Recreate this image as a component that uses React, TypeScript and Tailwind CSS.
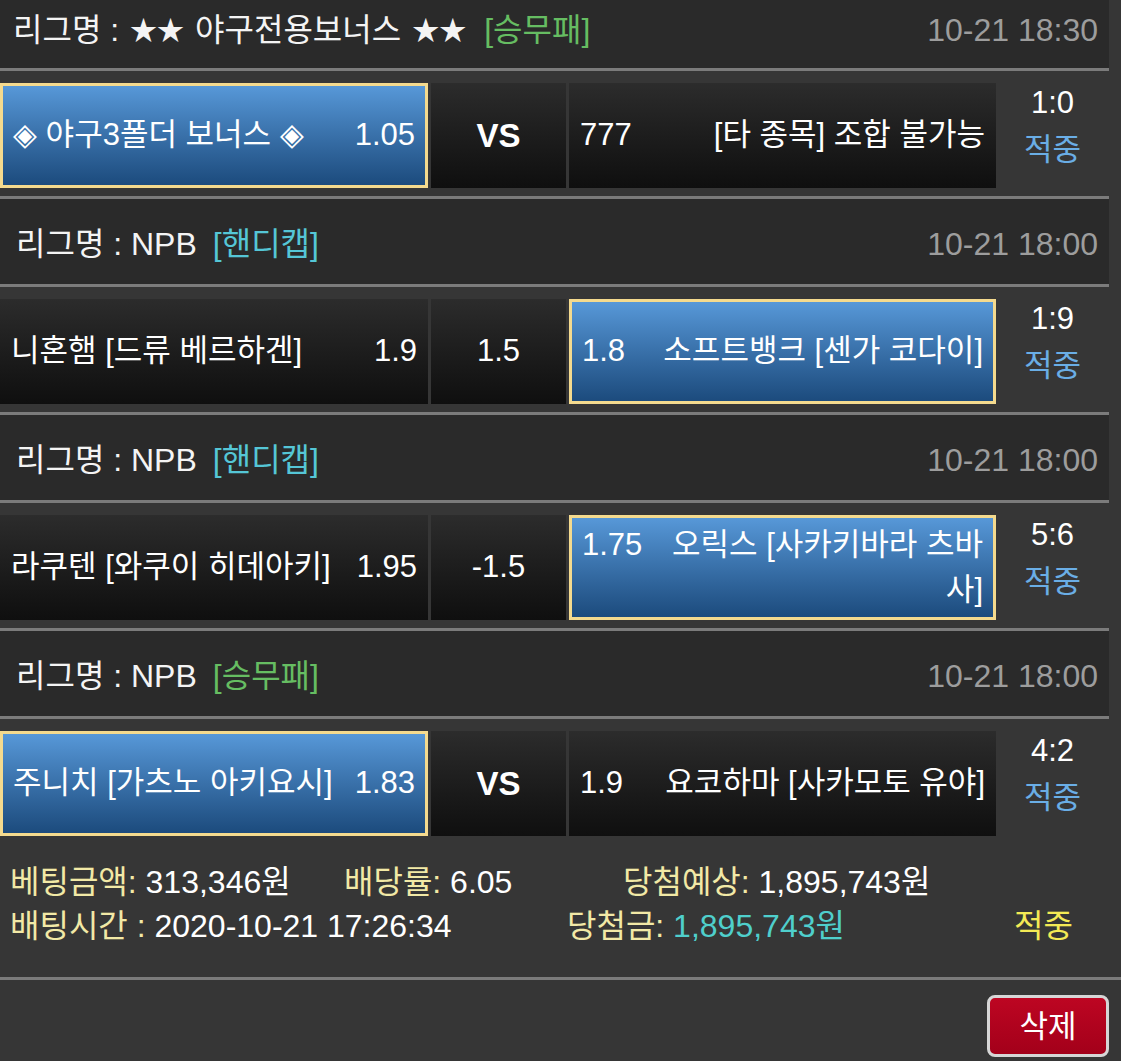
import React from "react";

const FONT = "font-['Liberation_Sans','Noto_Sans_CJK_KR',sans-serif]";

function Line({ full = false }: { full?: boolean }) {
  return <div className={`h-[3px] bg-[#7b7b7b] ${full ? "w-full" : "w-[1109px]"}`} />;
}

function Stars({ last = false }: { last?: boolean }) {
  return (
    <span
      className={`font-['Noto_Sans_CJK_KR',sans-serif] text-[27px] align-[1px] ${
        last ? "ml-[11px] mr-[2px]" : "mx-[11px]"
      }`}
    >
      ★★
    </span>
  );
}

function Header({
  league,
  tag,
  tagColor,
  time,
  first = false,
}: {
  league: React.ReactNode;
  tag: string;
  tagColor: string;
  time: string;
  first?: boolean;
}) {
  return (
    <div
      className={`w-[1109px] bg-[#2a2a2a] flex items-center justify-between pr-[11px] text-[32px] ${
        first ? "h-[68px] pb-[8px] pl-[13px]" : "h-[85px] pt-[4px] pl-[16px]"
      }`}
    >
      <div className="whitespace-nowrap text-[#f4f4f4]">
        {league}
        <span className={`ml-[16px] ${tagColor}`}>{tag}</span>
      </div>
      <div className="whitespace-nowrap text-[#9d9d9d]">{time}</div>
    </div>
  );
}

function Cell({
  selected,
  width,
  children,
  center = false,
}: {
  selected?: boolean;
  width: string;
  children: React.ReactNode;
  center?: boolean;
}) {
  const base = selected
    ? "border-[3px] border-[#f4da8e] bg-linear-to-b from-[#5798d8] to-[#1c4b7d] px-[10px]"
    : "bg-linear-to-b from-[#2c2c2c] to-[#0f0f0f] px-[11px]";
  return (
    <div
      className={`${width} h-[105px] shrink-0 flex items-center ${
        center ? "justify-center" : "justify-between"
      } ${base} text-white`}
    >
      {children}
    </div>
  );
}

function Score({ score }: { score: string }) {
  return (
    <div className="w-[113px] shrink-0 flex flex-col items-center leading-[47px] -mt-[4px]">
      <div className="text-white">{score}</div>
      <div className="text-[#6aaee6]">적중</div>
    </div>
  );
}

function MatchRow({ children }: { children: React.ReactNode }) {
  return <div className="w-[1109px] h-[125px] pt-[12px] pb-[8px] flex gap-[3px]">{children}</div>;
}

export default function App() {
  return (
    <div className={`${FONT} w-[1121px] min-h-[1061px] bg-[#363636] text-[31px] leading-[1.5] overflow-hidden`}>
      <Header
        first
        league={
          <>
            리그명 :<Stars />야구전용보너스<Stars last />
          </>
        }
        tag="[승무패]"
        tagColor="text-[#66bd62]"
        time="10-21 18:30"
      />
      <Line />
      <MatchRow>
        <Cell selected width="w-[428px]">
          <span className="whitespace-nowrap">◈ 야구3폴더 보너스 ◈</span>
          <span>1.05</span>
        </Cell>
        <Cell width="w-[135px]" center>
          <span className="font-bold text-[33px]">VS</span>
        </Cell>
        <div className="flex">
          <Cell width="w-[427px]">
            <span>777</span>
            <span className="whitespace-nowrap">[타 종목] 조합 불가능</span>
          </Cell>
          <Score score="1:0" />
        </div>
      </MatchRow>
      <Line />
      <Header league="리그명 : NPB" tag="[핸디캡]" tagColor="text-[#55c6d6]" time="10-21 18:00" />
      <Line />
      <MatchRow>
        <Cell width="w-[428px]">
          <span className="whitespace-nowrap">니혼햄 [드류 베르하겐]</span>
          <span>1.9</span>
        </Cell>
        <Cell width="w-[135px]" center>
          <span>1.5</span>
        </Cell>
        <div className="flex">
          <Cell selected width="w-[427px]">
            <span>1.8</span>
            <span className="whitespace-nowrap">소프트뱅크 [센가 코다이]</span>
          </Cell>
          <Score score="1:9" />
        </div>
      </MatchRow>
      <Line />
      <Header league="리그명 : NPB" tag="[핸디캡]" tagColor="text-[#55c6d6]" time="10-21 18:00" />
      <Line />
      <MatchRow>
        <Cell width="w-[428px]">
          <span className="whitespace-nowrap">라쿠텐 [와쿠이 히데아키]</span>
          <span>1.95</span>
        </Cell>
        <Cell width="w-[135px]" center>
          <span>-1.5</span>
        </Cell>
        <div className="flex">
          <Cell selected width="w-[427px]">
            <div className="flex w-full justify-between items-start self-stretch pt-[4px] leading-[45px]">
              <span>1.75</span>
              <span className="whitespace-nowrap text-right">
                오릭스 [사카키바라 츠바
                <br />
                사]
              </span>
            </div>
          </Cell>
          <Score score="5:6" />
        </div>
      </MatchRow>
      <Line />
      <Header league="리그명 : NPB" tag="[승무패]" tagColor="text-[#66bd62]" time="10-21 18:00" />
      <Line />
      <MatchRow>
        <Cell selected width="w-[428px]">
          <span className="whitespace-nowrap">주니치 [가츠노 아키요시]</span>
          <span>1.83</span>
        </Cell>
        <Cell width="w-[135px]" center>
          <span className="font-bold text-[33px]">VS</span>
        </Cell>
        <div className="flex">
          <Cell width="w-[427px]">
            <span>1.9</span>
            <span className="whitespace-nowrap">요코하마 [사카모토 유야]</span>
          </Cell>
          <Score score="4:2" />
        </div>
      </MatchRow>

      <div className="pt-[16px] pb-[29px] pl-[10px] leading-[44px] text-[32px] text-white whitespace-nowrap">
        <div className="flex">
          <div className="w-[334px]">
            <span className="text-[#f2e9a6]">베팅금액:</span> 313,346원
          </div>
          <div className="w-[279px]">
            <span className="text-[#f2e9a6]">배당률:</span> 6.05
          </div>
          <div>
            <span className="text-[#f2e9a6]">당첨예상:</span> 1,895,743원
          </div>
        </div>
        <div className="flex">
          <div className="w-[557px]">
            <span className="text-[#f2e9a6]">배팅시간 :</span> 2020-10-21 17:26:34
          </div>
          <div className="w-[447px]">
            <span className="text-[#f2e9a6]">당첨금:</span>{" "}
            <span className="text-[#4fcfcc]">1,895,743원</span>
          </div>
          <div className="text-[#f4ea55]">적중</div>
        </div>
      </div>
      <Line full />
      <div className="flex justify-end pt-[15px] pr-[12px] pb-[4px]">
        <button className="w-[122px] h-[62px] rounded-[8px] border-[3px] border-[#d6d6d6] bg-linear-to-b from-[#bd0622] to-[#a3001a] text-white text-[31px] leading-none flex items-center justify-center">
          삭제
        </button>
      </div>
    </div>
  );
}
